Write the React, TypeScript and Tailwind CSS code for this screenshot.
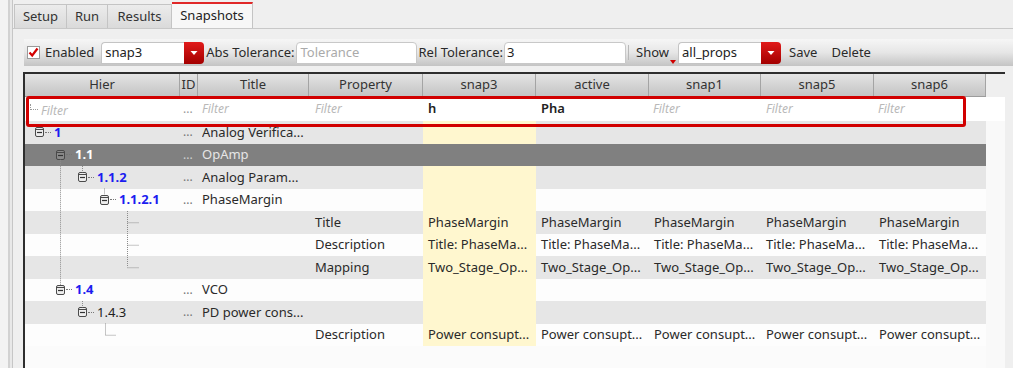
import React from "react";

type Hier = { label: string; indent: string; color: string; bold: boolean };
type Row = {
  hier?: Hier;
  id?: boolean;
  title?: string;
  prop?: string;
  vals?: string[];
  bg: "g" | "w" | "s";
  clip?: boolean;
};

const GRID =
  "grid grid-cols-[155px_18px_111px_114px_113px_113px_112px_113px_112px]";

const rows: Row[] = [
  { hier: { label: "1", indent: "pl-[10px]", color: "text-[#1c1cf0]", bold: true }, id: true, title: "Analog Verifica...", bg: "g", clip: true },
  { hier: { label: "1.1", indent: "pl-[31px]", color: "text-white", bold: true }, id: true, title: "OpAmp", bg: "s" },
  { hier: { label: "1.1.2", indent: "pl-[53px]", color: "text-[#1c1cf0]", bold: true }, id: true, title: "Analog Param...", bg: "g" },
  { hier: { label: "1.1.2.1", indent: "pl-[75px]", color: "text-[#1c1cf0]", bold: true }, id: true, title: "PhaseMargin", bg: "w" },
  { prop: "Title", vals: ["PhaseMargin", "PhaseMargin", "PhaseMargin", "PhaseMargin", "PhaseMargin"], bg: "g" },
  { prop: "Description", vals: ["Title: PhaseMa...", "Title: PhaseMa...", "Title: PhaseMa...", "Title: PhaseMa...", "Title: PhaseMa..."], bg: "w" },
  { prop: "Mapping", vals: ["Two_Stage_Op...", "Two_Stage_Op...", "Two_Stage_Op...", "Two_Stage_Op...", "Two_Stage_Op..."], bg: "g" },
  { hier: { label: "1.4", indent: "pl-[31px]", color: "text-[#1c1cf0]", bold: true }, id: true, title: "VCO", bg: "w" },
  { hier: { label: "1.4.3", indent: "pl-[53px]", color: "text-[#222]", bold: false }, id: true, title: "PD power cons...", bg: "g" },
  { prop: "Description", vals: ["Power consupt...", "Power consupt...", "Power consupt...", "Power consupt...", "Power consupt..."], bg: "w" },
];

function MinusBox({ dark }: { dark: boolean }) {
  return (
    <svg width="9" height="10" viewBox="0 0 9 10" className="shrink-0">
      <rect x="0.5" y="0.5" width="8" height="9" rx="1.5" fill={dark ? "#8a8a8a" : "#ededed"} stroke="#4a4a4a" />
      <line x1="0.5" y1="2.5" x2="8.5" y2="2.5" stroke="#4a4a4a" />
      <line x1="2" y1="5.5" x2="7" y2="5.5" stroke="#333" strokeWidth="1.2" />
    </svg>
  );
}

function Cell({ children, clip, className = "" }: { children?: React.ReactNode; clip?: boolean; className?: string }) {
  if (clip) {
    return (
      <div className={"h-[22.5px] overflow-hidden " + className}>
        <div className="mt-[6px] h-[16.5px] overflow-hidden">
          <div className="-mt-[6px] h-[22.5px] flex items-center whitespace-nowrap">{children}</div>
        </div>
      </div>
    );
  }
  return (
    <div className={"h-[22.5px] flex items-center whitespace-nowrap overflow-hidden " + className}>{children}</div>
  );
}

function DataRow({ r }: { r: Row }) {
  const sel = r.bg === "s";
  const rowBg = sel ? "bg-[#808080]" : r.bg === "g" ? "bg-[#e6e6e6]" : "bg-[#fdfdfd]";
  const txt = sel ? "text-[#e6e6e6]" : "text-[#2a2a2a]";
  return (
    <div className={GRID + " " + rowBg}>
      <Cell clip={r.clip} className={r.hier ? r.hier.indent : ""}>
        {r.hier && (
          <div className="flex items-center">
            <MinusBox dark={sel} />
            <span className="ml-[1px] mr-[3px] w-[6px] border-t border-dotted border-[#777]" />
            <span className={"text-[13px] " + r.hier.color + (r.hier.bold ? " font-bold" : "")}>{r.hier.label}</span>
          </div>
        )}
      </Cell>
      <Cell clip={r.clip} className={"pl-[3px] text-[12px] " + (sel ? "text-[#d0d0d0]" : "text-[#777]")}>
        {r.id ? "..." : ""}
      </Cell>
      <Cell clip={r.clip} className={"pl-[4px] text-[13px] " + txt}>{r.title}</Cell>
      <Cell clip={r.clip} className={"pl-[6px] text-[13px] " + txt}>{r.prop}</Cell>
      {[0, 1, 2, 3, 4].map((i) => (
        <Cell
          key={i}
          clip={r.clip}
          className={"pl-[5px] text-[13px] " + txt + (i === 0 && !sel ? " bg-[#fff7cf]" : "")}
        >
          {r.vals ? r.vals[i] : ""}
        </Cell>
      ))}
    </div>
  );
}

function TreeLines() {
  const cy = (i: number) => 11.25 + 22.5 * i;
  const c = "#8c8c8c";
  const d = "1 1";
  return (
    <svg className="absolute left-0 top-0 pointer-events-none" width="155" height="230">
      <line x1="35.5" y1={cy(1) + 5} x2="35.5" y2={cy(7) - 5} stroke={c} strokeDasharray={d} />
      <line x1="57.5" y1={22.5 * 2} x2="57.5" y2={cy(2) - 5} stroke={c} strokeDasharray={d} />
      <line x1="79.5" y1={22.5 * 3} x2="79.5" y2={cy(3) - 5} stroke={c} strokeDasharray={d} />
      <line x1="57.5" y1={22.5 * 8} x2="57.5" y2={cy(8) - 5} stroke={c} strokeDasharray={d} />
      <line x1="102.5" y1={22.5 * 4} x2="102.5" y2={cy(6)} stroke={c} strokeDasharray={d} />
      {[4, 5, 6].map((i) => (
        <line key={i} x1="102.5" y1={cy(i) + 0.5} x2="114" y2={cy(i) + 0.5} stroke={c} strokeDasharray={d} />
      ))}
      <line x1="80.5" y1={22.5 * 9} x2="80.5" y2={cy(9)} stroke={c} strokeDasharray={d} />
      <line x1="80.5" y1={cy(9) + 0.5} x2="91" y2={cy(9) + 0.5} stroke={c} strokeDasharray={d} />
    </svg>
  );
}

function Combo({ value, w }: { value: string; w: string }) {
  return (
    <div className={"flex h-[22px] " + w}>
      <div className="flex-1 flex items-center bg-white border border-[#c4c4c4] border-r-0 rounded-tl-[4px] pl-[3px] text-[13px] text-[#222]">
        {value}
      </div>
      <div className="w-[20px] flex items-center justify-center rounded-r-[4px] bg-linear-to-b from-[#e11a1a] to-[#a30000]">
        <svg width="8" height="6" viewBox="0 0 8 6">
          <path d="M0.5 1 L7.5 1 L4 5 Z" fill="#fff" />
        </svg>
      </div>
    </div>
  );
}

function Filter({ children }: { children: React.ReactNode }) {
  return <span className="italic text-[12px] text-[#b8b8b8]">{children}</span>;
}

export default function App() {
  const font = "font-['Noto_Sans','Open_Sans',sans-serif]";
  return (
    <div className={"w-[1013px] h-[376px] overflow-hidden bg-white " + font}>
      <div className="h-[368px] flex bg-[#efefef]">
        {/* left gutter */}
        <div className="w-[13px] shrink-0 flex">
          <div className="w-[8px] bg-[#f3f3f3]" />
          <div className="w-[2px] bg-[#d2d2d2]" />
          <div className="w-[2px] bg-[#e8e8e8]" />
          <div className="w-[1px] bg-[#c6c6c6]" />
        </div>
        <div className="flex-1 flex flex-col">
          {/* tabs */}
          <div className="h-[29px] flex items-end pl-[1px] border-b border-[#c8c8c8]">
            <div className="h-[24px] w-[53px] flex items-center justify-center text-[13px] text-[#333] bg-linear-to-b from-[#ececec] to-[#dadada] border border-b-0 border-[#c4c4c4]">
              Setup
            </div>
            <div className="h-[24px] w-[41px] flex items-center justify-center text-[13px] text-[#333] bg-linear-to-b from-[#ececec] to-[#dadada] border border-b-0 border-l-0 border-[#c4c4c4]">
              Run
            </div>
            <div className="h-[24px] w-[64px] flex items-center justify-center text-[13px] text-[#333] bg-linear-to-b from-[#ececec] to-[#dadada] border border-b-0 border-l-0 border-[#c4c4c4]">
              Results
            </div>
            <div className="h-[26px] w-[81px] flex items-center justify-center text-[13px] text-[#222] bg-[#f7f7f7] border-t-2 border-t-[#e02828] border-r border-[#c4c4c4]">
              Snapshots
            </div>
          </div>
          {/* toolbar */}
          <div className="mt-[10px] ml-[11px] h-[27px] flex items-center bg-linear-to-b from-[#f6f6f6] via-[#e6e6e6] to-[#c4c4c4] text-[13px] text-[#2a2a2a]">
            <div className="ml-[3px] w-[13px] h-[13px] bg-white border border-[#9a9a9a] flex items-center justify-center">
              <svg width="11" height="11" viewBox="0 0 11 11">
                <path d="M1.5 5.5 L4.2 8.5 L9.5 1.5" stroke="#d40000" strokeWidth="2.2" fill="none" />
              </svg>
            </div>
            <span className="ml-[5px]">Enabled</span>
            <div className="ml-[7px]">
              <Combo value="snap3" w="w-[103px]" />
            </div>
            <span className="ml-[2px]">Abs Tolerance:</span>
            <div className="ml-[1px] w-[121px] h-[22px] bg-white border border-[#c8c8c8] rounded-t-[4px] flex items-center pl-[4px] text-[#aaa]">
              Tolerance
            </div>
            <span className="ml-[2px]">Rel Tolerance:</span>
            <div className="ml-[1px] w-[122px] h-[22px] bg-white border border-[#c8c8c8] rounded-t-[4px] flex items-center pl-[2px] text-[#222]">
              3
            </div>
            <span className="ml-[2px] w-[1px] h-[15px] bg-[#b8b8b8]" />
            <span className="ml-[7px]">Show</span>
            <span className="self-end mb-[2px] ml-[1px] w-0 h-0 border-l-[3px] border-r-[3px] border-t-[4px] border-l-transparent border-r-transparent border-t-[#d00000]" />
            <div className="ml-[2px]">
              <Combo value="all_props" w="w-[103px]" />
            </div>
            <span className="ml-[8px]">Save</span>
            <span className="ml-[14px]">Delete</span>
          </div>
          {/* table */}
          <div className="mt-[6px] ml-[10px] mr-[8px] flex-1 relative border-t-2 border-l-2 border-[#2e2e2e] flex flex-col bg-[#fbfbfb]">
            <div className="flex">
              <div className={GRID + " h-[23px] border-b border-[#9c9c9c] text-[13px] text-[#333]"}>
                {["Hier", "ID", "Title", "Property", "snap3", "active", "snap1", "snap5", "snap6"].map((h) => (
                  <div
                    key={h}
                    className="flex items-center justify-center bg-linear-to-b from-[#e4e4e4] to-[#c4c4c4] border-r border-[#a4a4a4]"
                  >
                    {h}
                  </div>
                ))}
              </div>
              <div className="flex-1 bg-[#efefef]" />
            </div>
            {/* filter row */}
            <div className={GRID + " h-[24px] bg-white"}>
              <div className="flex items-center pl-[5px]">
                <span className="w-[8px] h-[6px] mb-[5px] border-l border-b border-dotted border-[#999]" />
                <span className="ml-[3px]"><Filter>Filter</Filter></span>
              </div>
              <div className="flex items-center pl-[3px] text-[12px] text-[#999]">...</div>
              <div className="flex items-center pl-[4px]"><Filter>Filter</Filter></div>
              <div className="flex items-center pl-[6px]"><Filter>Filter</Filter></div>
              <div className="flex items-center pl-[5px] text-[13px] text-[#222] font-semibold">h</div>
              <div className="flex items-center pl-[5px] text-[13px] text-[#222] font-semibold">Pha</div>
              <div className="flex items-center pl-[4px]"><Filter>Filter</Filter></div>
              <div className="flex items-center pl-[5px]"><Filter>Filter</Filter></div>
              <div className="flex items-center pl-[4px]"><Filter>Filter</Filter></div>
            </div>
            {/* body */}
            <div className="relative flex-1 flex">
              <div className="flex flex-col">
                {rows.map((r, i) => (
                  <DataRow key={i} r={r} />
                ))}
              </div>
              <div className="flex-1 bg-[#f9f9f9]" />
              <TreeLines />
            </div>
            {/* annotation box */}
            <div className="absolute left-[1px] top-[22px] w-[940px] h-[31px] border-[3px] border-[#d10000] rounded-[3px] pointer-events-none" />
          </div>
        </div>
      </div>
    </div>
  );
}
